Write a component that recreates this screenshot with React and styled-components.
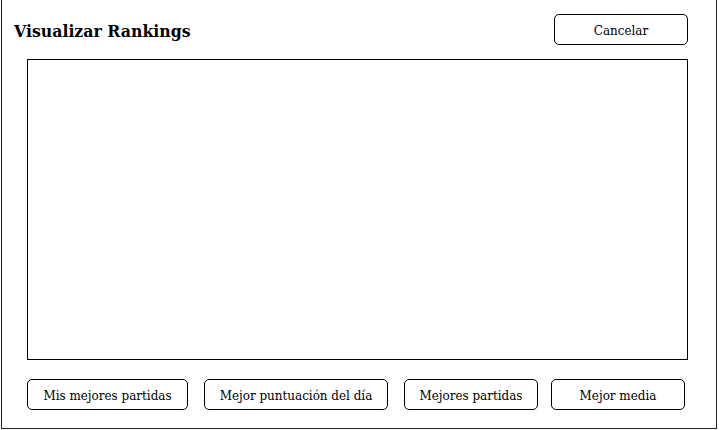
import React from "react";
import styled, { createGlobalStyle } from "styled-components";

const Global = createGlobalStyle`
  html, body { margin: 0; padding: 0; background: #ffffff; }
  body { font-family: "DejaVu Serif Condensed", "DejaVu Serif", serif; font-stretch: semi-condensed; color: #000; }
`;

const Frame = styled.div`
  box-sizing: border-box;
  margin-left: 1px;
  width: 716px;
  height: 429px;
  border: 1px solid #222;
  border-top: none;
  display: flex;
  flex-direction: column;
`;

const Header = styled.div`
  display: flex;
  align-items: center;
  justify-content: space-between;
  padding: 14px 28px 0 12px;
  height: 31px;
`;

const Title = styled.h1`
  margin: 0;
  font-family: "DejaVu Serif Condensed", "DejaVu Serif", serif;
  font-stretch: semi-condensed;
  font-weight: bold;
  font-size: 17.5px;
  line-height: 20px;
  padding-top: 3px;
`;

const Button = styled.button`
  box-sizing: border-box;
  width: ${(p) => p.$w}px;
  height: 31px;
  border: 1px solid #000;
  border-radius: 5px;
  background: #fff;
  font-family: "DejaVu Serif Condensed", "DejaVu Serif", serif;
  font-stretch: semi-condensed;
  font-size: 13.3px;
  color: #000;
  padding: 2px 0 0 0;
  display: flex;
  align-items: center;
  justify-content: center;
`;

const Panel = styled.div`
  box-sizing: border-box;
  margin: 14px 28px 0 25px;
  height: 301px;
  border: 1px solid #000;
`;

const Footer = styled.div`
  display: flex;
  margin: 19px 0 0 25px;
  gap: 16px;
`;

const buttons = [
  { label: "Mis mejores partidas", w: 161, gap: 16 },
  { label: "Mejor puntuación del día", w: 184, gap: 16 },
  { label: "Mejores partidas", w: 134, gap: 13 },
  { label: "Mejor media", w: 134, gap: 16 },
];

const FooterButton = styled(Button)`
  margin-right: ${(p) => p.$gap - 16}px;
`;

export default function App() {
  return (
    <>
      <Global />
      <Frame>
        <Header>
          <Title>Visualizar Rankings</Title>
          <Button $w={134}>Cancelar</Button>
        </Header>
        <Panel />
        <Footer>
          {buttons.map((b) => (
            <FooterButton key={b.label} $w={b.w} $gap={b.gap}>
              {b.label}
            </FooterButton>
          ))}
        </Footer>
      </Frame>
    </>
  );
}
